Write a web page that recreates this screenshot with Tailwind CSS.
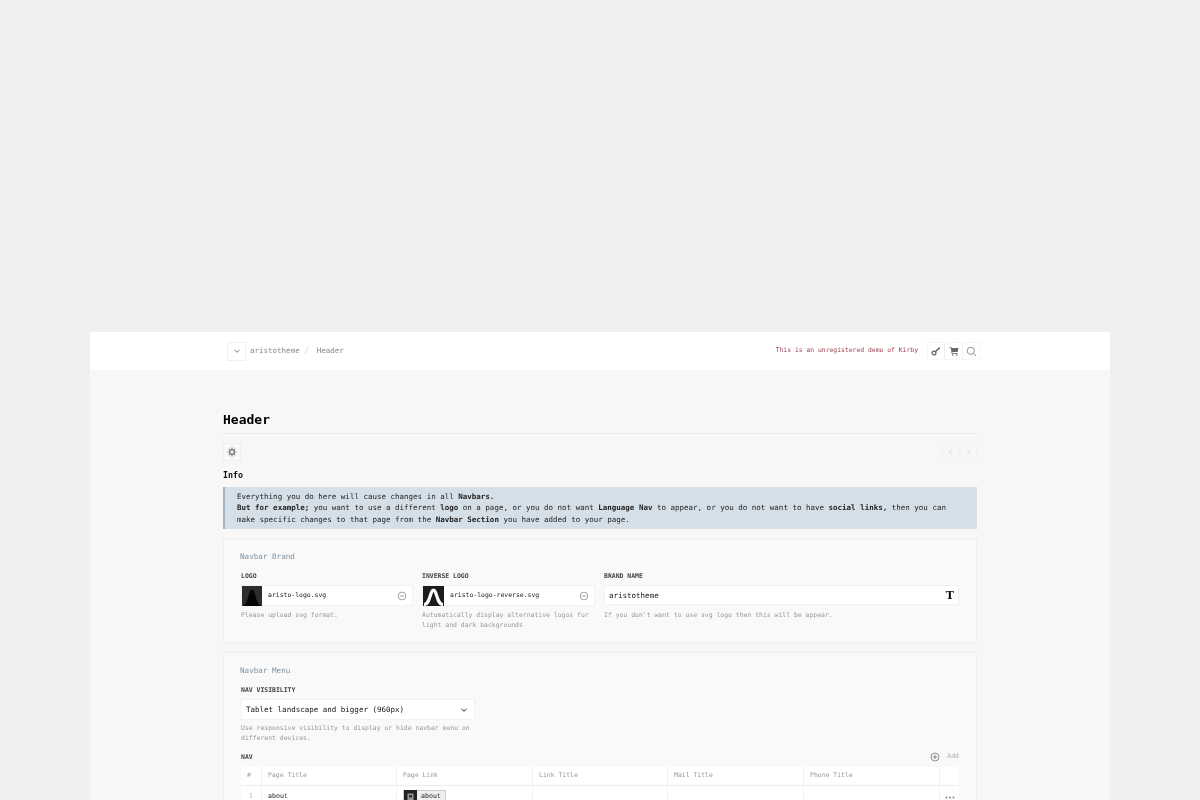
<!DOCTYPE html>
<html lang="en">
<head>
    <meta charset="UTF-8">
    <meta name="viewport" content="width=device-width, initial-scale=1.0">
    <title>Header | aristotheme</title>
    <script src="https://cdn.jsdelivr.net/npm/@tailwindcss/browser@4"></script>
</head>
<body class="bg-[#efefef] font-['DejaVu_Sans_Mono',monospace] text-[#111]">
<div class="h-[800px] overflow-hidden pt-[332px]">
    <div class="mx-[90px] min-h-[500px] bg-[#f7f7f7] blur-[0.3px]">

        <!-- Topbar -->
        <div class="flex h-[38px] items-center bg-white pl-[137px] pr-[129px]">
            <button class="flex size-[19px] items-center justify-center border border-[#f0f0f0] text-[#777]">
                <svg width="8" height="8" viewBox="0 0 8 8" fill="none" stroke="currentColor" stroke-width="1"><path d="M1.5 2.8 4 5.3l2.5-2.5"/></svg>
            </button>
            <span class="ml-1 text-[7.5px] text-[#888]">aristotheme</span>
            <span class="mx-[4.5px] text-[7.5px] text-[#ccc]">/</span>
            <span class="ml-[3.5px] text-[7.5px] text-[#888]">Header</span>
            <span class="ml-auto mr-[9px] text-[6.4px] text-[#9c3f50]">This is an unregistered demo of Kirby</span>
            <div class="flex h-[18px] border border-[#f6f6f6]">
                <span class="flex w-[17.33px] items-center justify-center border-r border-[#f0f0f0]">
                    <svg width="10" height="10" viewBox="0 0 10 10" fill="none" stroke="#666"><circle cx="3" cy="7" r="1.9" stroke-width="1.3"/><path d="M4.5 5.5 8.8 1.6" stroke-width="1.5"/></svg>
                </span>
                <span class="flex w-[17.33px] items-center justify-center border-r border-[#f0f0f0]">
                    <svg width="10" height="10" viewBox="0 0 10 10" fill="#666"><path d="M.5 1h1.7l.3 1h7l-.9 4H3.3l.2 1h5.300v.8H2.800L1.600 1.800H.5z"/><circle cx="3.700" cy="9" r=".8"/><circle cx="7.700" cy="9" r=".8"/></svg>
                </span>
                <span class="flex w-[17.33px] items-center justify-center">
                    <svg width="11" height="11" viewBox="0 0 11 11" fill="none" stroke="#777" stroke-width=".8"><circle cx="4.800" cy="4.800" r="3.600"/><path d="m7.500 7.500 2.500 2.500"/></svg>
                </span>
            </div>
        </div>

        <main class="px-[133px] pt-[40px]">
            <h1 class="border-b border-[#e9e9e9] pb-[4px] text-[13px] leading-[19px] font-bold text-black">Header</h1>

            <div class="mt-[9px] flex h-[18px] justify-between">
                <button class="flex size-[18px] items-center justify-center border border-[#f0f0f0]">
                    <svg width="10" height="10" viewBox="0 0 10 10" fill="none" stroke="#888"><circle cx="5" cy="5" r="2.300" stroke-width="1.700"/><path d="M5 .5v9M.5 5h9M1.800 1.800l6.400 6.400M8.200 1.800 1.800 8.200" stroke-width="1.200" stroke-dasharray="1.500 6 1.500"/></svg>
                </button>
                <div class="flex">
                    <button class="flex h-[18px] w-[17.500px] items-center justify-center border border-[#f2f2f2] text-[#ddd]">
                        <svg width="7" height="8" viewBox="0 0 7 8" fill="none" stroke="currentColor"><path d="M4.800 1.200 2 4l2.800 2.800"/></svg>
                    </button>
                    <button class="flex h-[18px] w-[17.500px] items-center justify-center border border-[#f2f2f2] text-[#ddd]">
                        <svg width="7" height="8" viewBox="0 0 7 8" fill="none" stroke="currentColor"><path d="M2.200 1.200 5 4 2.200 6.800"/></svg>
                    </button>
                </div>
            </div>

            <h2 class="mt-[9px] text-[8.300px] leading-[11px] font-bold">Info</h2>
            <div class="mt-[6px] border-l-2 border-[#a3b5c4] bg-[#d5dfe7] py-[4px] pl-[12px] pr-[20px] text-[7.500px] leading-[11.400px] text-[#222]">
                <p>Everything you do here will cause changes in all <b>Navbars.</b></p>
                <p><b>But for example;</b> you want to use a different <b>logo</b> on a page, or you do not want <b>Language Nav</b> to appear, or you do not want to have <b>social links,</b> then you can</p>
                <p>make specific changes to that page from the <b>Navbar Section</b> you have added to your page.</p>
            </div>

            <!-- Navbar Brand -->
            <section class="mt-[10px] h-[104px] border border-[#f0f0f0] bg-[#f9f9f9] pt-[12px]">
                <h3 class="pl-[16px] text-[7.600px] leading-[9px] text-[#7d92a3]">Navbar Brand</h3>
                <div class="mt-[11px] grid grid-cols-[172px_173px_1fr] gap-[9px] px-[17px]">
                    <div>
                        <label class="block text-[6.450px] leading-[9px] font-semibold text-[#444]">LOGO</label>
                        <div class="mt-[4px] flex h-[21px] items-center border border-[#f2f2f2] bg-white">
                            <svg width="20" height="20" viewBox="0 0 20 20" class="shrink-0"><rect width="20" height="20" fill="#2d2d2d"/><path d="M0 20c4-.5 5-5 6.500-10C7.500 6 8.500 3.500 10 3.500S12.500 6 13.500 10c1.500 5 2.500 9.500 6.500 10z" fill="#050505"/></svg>
                            <span class="ml-[6px] text-[6.450px] text-[#222]">aristo-logo.svg</span>
                            <svg width="10" height="10" viewBox="0 0 10 10" fill="none" stroke="#777" stroke-width=".7" class="ml-auto mr-[5px]"><circle cx="5" cy="5" r="3.900"/><path d="M2.800 5h4.400"/></svg>
                        </div>
                        <p class="mt-[5px] text-[6.450px] leading-[9.400px] text-[#999]">Please upload svg format.</p>
                    </div>
                    <div>
                        <label class="block text-[6.450px] leading-[9px] font-semibold text-[#444]">INVERSE LOGO</label>
                        <div class="mt-[4px] flex h-[21px] items-center border border-[#f2f2f2] bg-white">
                            <svg width="21" height="20" viewBox="0 0 21 20" class="shrink-0"><rect width="21" height="20" fill="#1c1c1c"/><path d="M1 18.500c4 0 5-5 6.500-9.500 1-3.500 2-5 3-5s2 1.500 3 5c1.500 4.500 2.500 9.500 6.500 9.500" fill="none" stroke="#fff" stroke-width="3.200"/></svg>
                            <span class="ml-[6px] text-[6.450px] text-[#222]">aristo-logo-reverse.svg</span>
                            <svg width="10" height="10" viewBox="0 0 10 10" fill="none" stroke="#777" stroke-width=".7" class="ml-auto mr-[5px]"><circle cx="5" cy="5" r="3.900"/><path d="M2.800 5h4.400"/></svg>
                        </div>
                        <p class="mt-[5px] text-[6.450px] leading-[9.400px] text-[#999]">Automatically display alternative logos for light and dark backgrounds</p>
                    </div>
                    <div>
                        <label class="block text-[6.450px] leading-[9px] font-semibold text-[#444]">BRAND NAME</label>
                        <div class="mt-[4px] flex h-[20px] items-center border border-[#f2f2f2] bg-white pl-[4px] pr-[4px]">
                            <span class="text-[7.500px] text-[#111]">aristotheme</span>
                            <span class="ml-auto font-['DejaVu_Serif',serif] text-[11px] font-bold leading-none">T</span>
                        </div>
                        <p class="mt-[6px] text-[6.450px] leading-[9.400px] text-[#999]">If you don't want to use svg logo then this will be appear.</p>
                    </div>
                </div>
            </section>

            <!-- Navbar Menu -->
            <section class="mt-[9px] border border-[#f0f0f0] bg-[#f9f9f9] pt-[13px] pb-4">
                <h3 class="pl-[16px] text-[7.600px] leading-[9px] text-[#7d92a3]">Navbar Menu</h3>
                <div class="px-[17px]">
                    <label class="mt-[11px] block text-[6.450px] leading-[9px] font-semibold text-[#444]">NAV VISIBILITY</label>
                    <div class="mt-[4px] flex h-[21px] w-[234px] items-center justify-between border border-[#f2f2f2] bg-white pl-[4px] pr-[6px]">
                        <span class="text-[7.500px] text-[#111]">Tablet landscape and bigger (960px)</span>
                        <svg width="8" height="8" viewBox="0 0 8 8" fill="none" stroke="#222" stroke-width="1"><path d="M1.500 2.800 4 5.300l2.500-2.500"/></svg>
                    </div>
                    <p class="mt-[4px] w-[234px] text-[6.450px] leading-[9.400px] text-[#999]">Use responsive visibility to display or hide navbar menu on different devices.</p>

                    <div class="mt-[9px] flex h-[10px] items-center justify-between">
                        <label class="text-[6.450px] leading-[9px] font-semibold text-[#444]">NAV</label>
                        <span class="flex items-center gap-[7px] text-[6.450px] text-[#aaa]">
                            <svg width="10" height="10" viewBox="0 0 10 10" fill="none" stroke="#666" stroke-width=".7"><circle cx="5" cy="5" r="4"/><path d="M2.700 5h4.600M5 2.700v4.600"/></svg>
                            Add
                        </span>
                    </div>

                    <div class="mt-[5px] bg-white text-[6.450px]">
                        <div class="grid h-[19px] grid-cols-[20px_135px_136px_135px_136px_136px_1fr] items-center border-b border-[#eee] text-[#999]">
                            <span class="pl-[6px]">#</span>
                            <span class="flex h-full items-center border-l border-[#f2f2f2] pl-[6px]">Page Title</span>
                            <span class="flex h-full items-center border-l border-[#f2f2f2] pl-[6px]">Page Link</span>
                            <span class="flex h-full items-center border-l border-[#f2f2f2] pl-[6px]">Link Title</span>
                            <span class="flex h-full items-center border-l border-[#f2f2f2] pl-[6px]">Mail Title</span>
                            <span class="flex h-full items-center border-l border-[#f2f2f2] pl-[6px]">Phone Title</span>
                            <span class="h-full border-l border-[#f2f2f2]"></span>
                        </div>
                        <div class="grid h-[22px] grid-cols-[20px_135px_136px_135px_136px_136px_1fr] items-center border-b border-[#eee] text-[#222]">
                            <span class="pl-[8px] pt-[1px] text-[#bbb]">1</span>
                            <span class="flex h-full items-center border-l border-[#f2f2f2] pl-[6px] pt-[1px] text-[6.600px]">about</span>
                            <span class="flex h-full items-center border-l border-[#f2f2f2] pl-[6px]">
                                <span class="flex h-[13px] items-center border border-[#ccc] bg-[#efefef]">
                                    <span class="flex h-[13px] w-[13px] items-center justify-center bg-[#222]">
                                        <svg width="7" height="8" viewBox="0 0 7 8"><rect x=".5" y=".5" width="6" height="7" fill="#999"/><rect x="2" y="2" width="3" height="2.500" fill="#333"/></svg>
                                    </span>
                                    <span class="px-[4px] text-[6.600px]">about</span>
                                </span>
                            </span>
                            <span class="h-full border-l border-[#f2f2f2]"></span>
                            <span class="h-full border-l border-[#f2f2f2]"></span>
                            <span class="h-full border-l border-[#f2f2f2]"></span>
                            <span class="flex h-full items-center justify-center border-l border-[#f2f2f2] pt-[2px]">
                                <svg width="10" height="3" viewBox="0 0 10 3" fill="#777"><circle cx="1.500" cy="1.500" r=".9"/><circle cx="5" cy="1.500" r=".9"/><circle cx="8.500" cy="1.500" r=".9"/></svg>
                            </span>
                        </div>
                    </div>
                </div>
            </section>
        </main>
    </div>
</div>
</body>
</html>
